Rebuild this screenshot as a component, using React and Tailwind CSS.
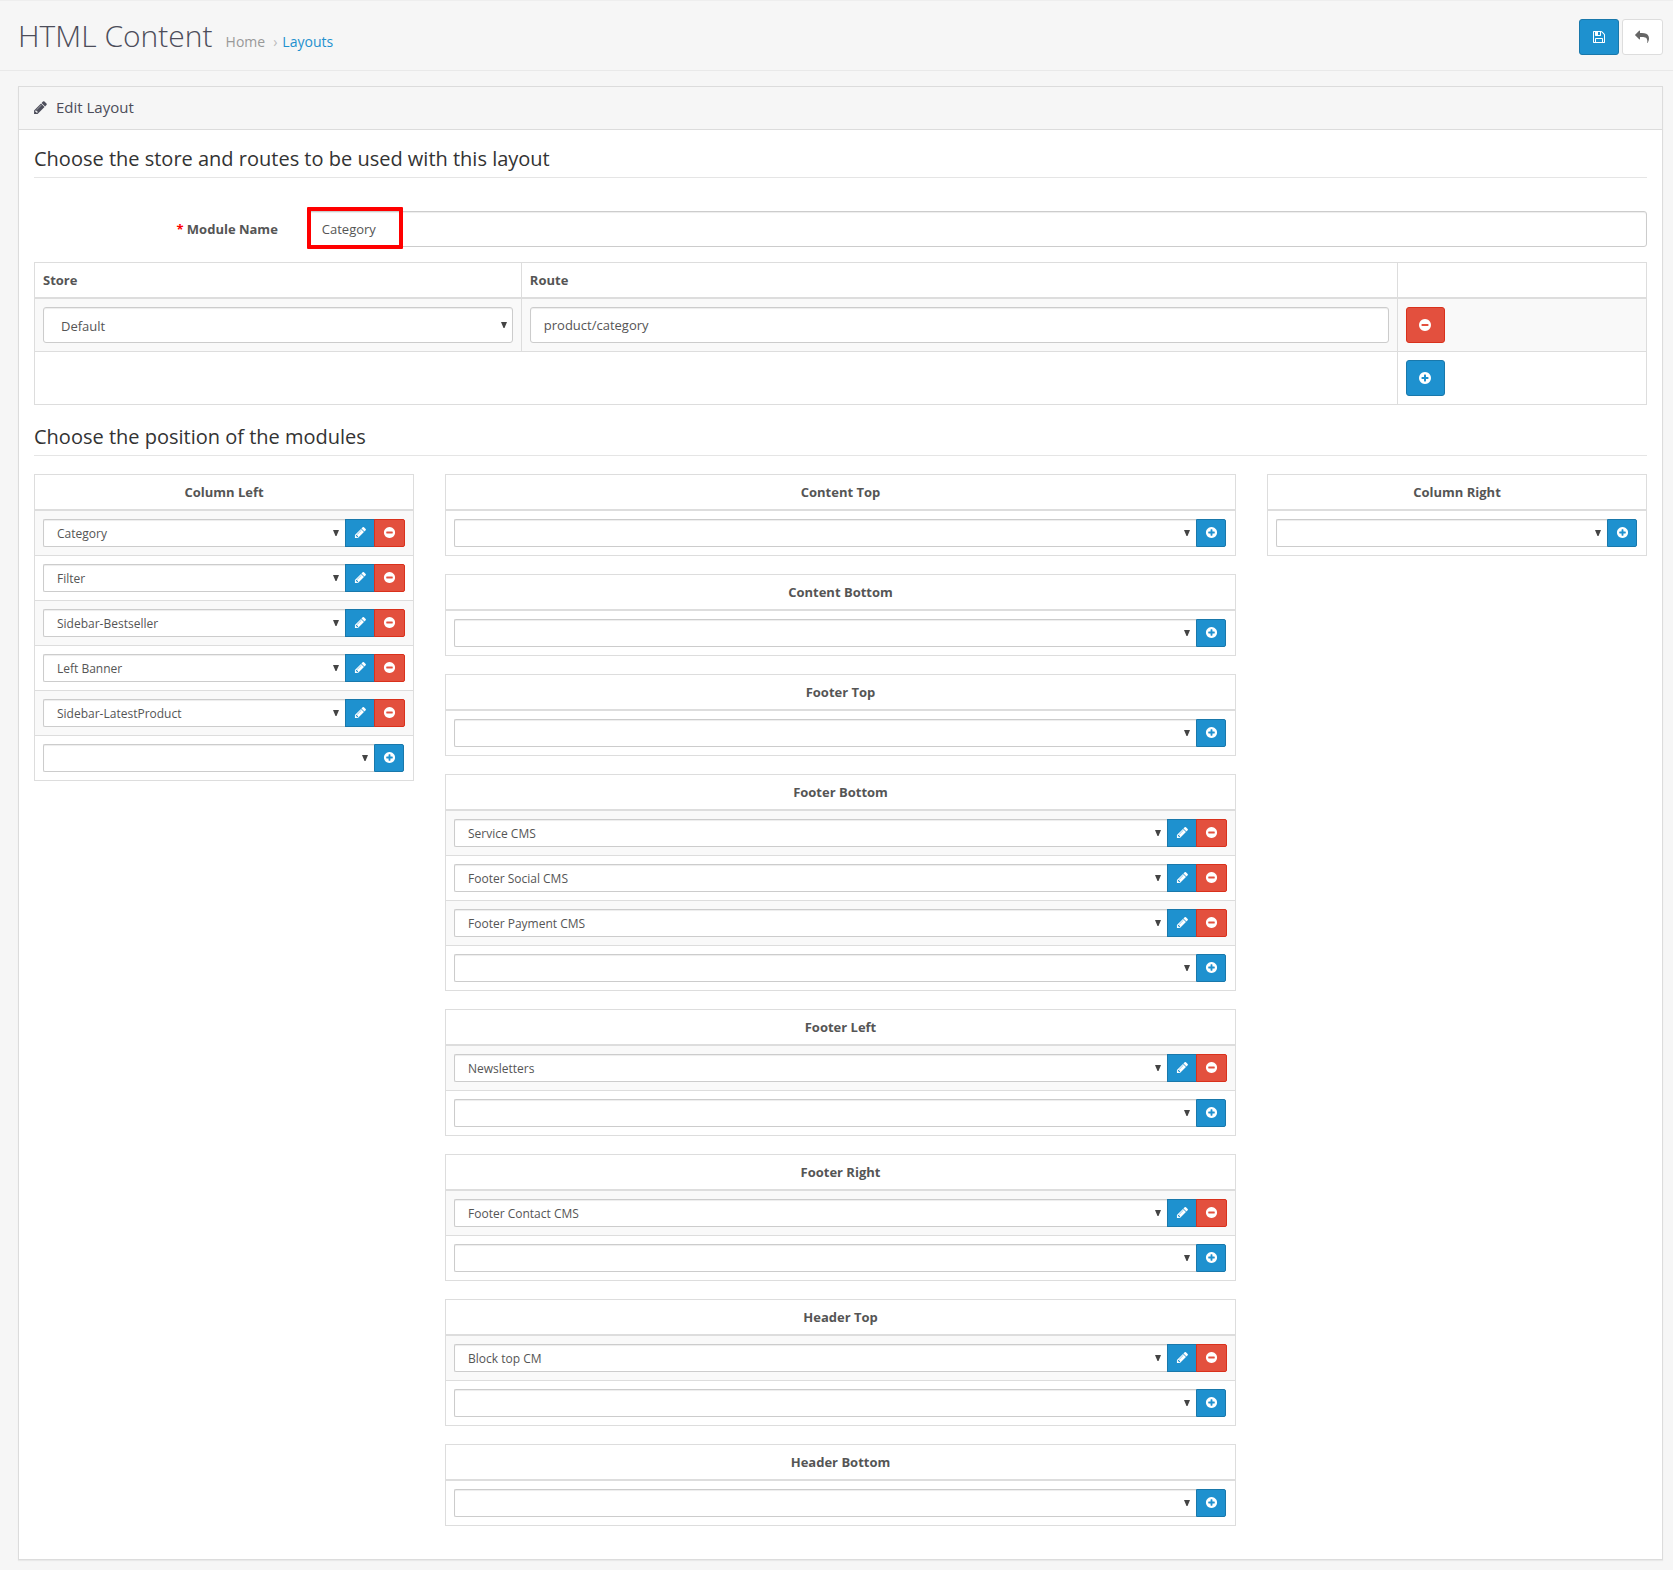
import React from "react";

const CIRCLE =
  "m320-64q0 209-103 385.5t-279.5 279.5-385.5 103-385.5-103-279.5-279.5-103-385.5 103-385.5 279.5-279.5 385.5-103 385.5 103 279.5 279.5 103 385.5z";

const ICONS = {
  pencil:
    "M491 1536l91-91-235-235-91 91v107h128v128h107zm523-928q0-22-22-22-10 0-17 7l-542 542q-7 7-7 17 0 22 22 22 10 0 17-7l542-542q7-7 7-17zm-54-192l416 416-832 832h-416v-416zm683 96q0 53-37 90l-166 166-416-416 166-165q36-38 90-38 53 0 91 38l235 234q37 39 37 91z",
  save: "M512 1536h768v-384h-768v384zm896 0h128v-896q0-14-10-38.5t-20-34.5l-281-281q-10-10-34-20t-39-10v416q0 40-28 68t-68 28h-576q-40 0-68-28t-28-68v-416h-128v1280h128v-416q0-40 28-68t68-28h832q40 0 68 28t28 68v416zm-384-928v-320q0-13-9.5-22.5t-22.5-9.5h-192q-13 0-22.5 9.5t-9.5 22.5v320q0 13 9.5 22.5t22.5 9.5h192q13 0 22.5-9.5t9.5-22.5zm640 32v928q0 40-28 68t-68 28h-1344q-40 0-68-28t-28-68v-1344q0-40 28-68t68-28h928q40 0 88 20t76 48l280 280q28 28 48 76t20 88z",
  reply:
    "M1792 1120q0 166-127 451-3 7-10.5 24t-13.5 30-13 22q-12 17-28 17-15 0-23.5-10t-8.5-25q0-9 2.5-26.5t2.5-23.5q5-68 5-123 0-101-17.5-181t-48.5-138.5-80-101-105.5-69.5-133-42.5-154-21.5-175.5-6h-224v256q0 26-19 45t-45 19-45-19l-512-512q-19-19-19-45t19-45l512-512q19-19 45-19t45 19 19 45v256h224q713 0 875 403 53 134 53 333z",
  minus:
    "M1344 960v-128q0-26-19-45t-45-19h-768q-26 0-45 19t-19 45v128q0 26 19 45t45 19h768q26 0 45-19t19-45z" + CIRCLE,
  plus:
    "M1344 960v-128q0-26-19-45t-45-19h-256v-256q0-26-19-45t-45-19h-128q-26 0-45 19t-19 45v256h-256q-26 0-45 19t-19 45v128q0 26 19 45t45 19h256v256q0 26 19 45t45 19h128q26 0 45-19t19-45v-256h256q26 0 45-19t19-45z" + CIRCLE,
};

function Icon({ name, className = "size-[14px]" }) {
  return (
    <svg viewBox="0 0 1792 1792" fill="currentColor" className={className} aria-hidden="true">
      <path d={ICONS[name]} />
    </svg>
  );
}

const BLUE = "border-[#1978ab] bg-[#1e91cf] text-white";
const RED = "border-[#d9311c] bg-[#e3503e] text-white";
const WHITE = "border-[#dddddd] bg-white text-[#666666]";

function Button({ icon, tone, label, className, iconClass }) {
  return (
    <button
      type="button"
      aria-label={label}
      className={`flex shrink-0 cursor-pointer items-center justify-center border ${tone} ${className}`}
    >
      <Icon name={icon} className={iconClass} />
    </button>
  );
}

const FIELD = "border border-[#cccccc] bg-white text-[#555555] shadow-[inset_0_1px_1px_rgba(0,0,0,0.075)]";

function Select({ label, value, className }) {
  return (
    <div className="relative flex min-w-0 flex-1">
      <select aria-label={label} defaultValue={value} className={`w-full appearance-none ${FIELD} ${className}`}>
        <option value={value}>{value}</option>
      </select>
      <svg
        viewBox="0 0 6 6"
        className="pointer-events-none absolute top-1/2 right-[6px] size-[6px] -translate-y-1/2 fill-[#444444]"
        aria-hidden="true"
      >
        <path d="M0 0h6L3.5 6h-1z" />
      </svg>
    </div>
  );
}

const LINE = "border border-[#dddddd]";
const HEAD = "border border-b-2 border-[#dddddd] p-2 font-bold";

function ModuleTable({ title, modules = [] }) {
  return (
    <table className="mb-[18px] w-full border-collapse">
      <thead>
        <tr>
          <th className={`${HEAD} text-center`}>{title}</th>
        </tr>
      </thead>
      <tbody>
        {modules.map((name) => (
          <tr key={name} className="odd:bg-[#f9f9f9]">
            <td className={`${LINE} p-2`}>
              <div className="flex">
                <Select
                  label={`${title} module`}
                  value={name}
                  className="h-7 rounded-l-[2px] border-r-0 pt-[2px] pl-[13px] text-xs"
                />
                <Button
                  icon="pencil"
                  tone={BLUE}
                  label={`Edit ${name}`}
                  className="h-7 w-[30px] pb-px pl-px"
                  iconClass="size-[13px]"
                />
                <Button
                  icon="minus"
                  tone={RED}
                  label={`Remove ${name}`}
                  className="-ml-px h-7 w-[31px] rounded-r-[2px] pb-px"
                  iconClass="size-[13px]"
                />
              </div>
            </td>
          </tr>
        ))}
        <tr>
          <td className={`${LINE} p-2`}>
            <div className="flex pr-px">
              <Select
                label={`Add ${title} module`}
                value=""
                className="h-7 rounded-l-[2px] border-r-0 pl-[13px] text-xs"
              />
              <Button
                icon="plus"
                tone={BLUE}
                label={`Add module to ${title}`}
                className="h-7 w-[30px] rounded-r-[2px] pb-px pl-px"
                iconClass="size-[13px]"
              />
            </div>
          </td>
        </tr>
      </tbody>
    </table>
  );
}

const CENTER = [
  { title: "Content Top" },
  { title: "Content Bottom" },
  { title: "Footer Top" },
  { title: "Footer Bottom", modules: ["Service CMS", "Footer Social CMS", "Footer Payment CMS"] },
  { title: "Footer Left", modules: ["Newsletters"] },
  { title: "Footer Right", modules: ["Footer Contact CMS"] },
  { title: "Header Top", modules: ["Block top CM"] },
  { title: "Header Bottom" },
];

const LEFT = ["Category", "Filter", "Sidebar-Bestseller", "Left Banner", "Sidebar-LatestProduct"];

function SectionTitle({ children }) {
  return (
    <h2 className="mb-[18px] border-b border-[#e5e5e5] pb-1 text-[20px] leading-7 text-[#333333]">{children}</h2>
  );
}

export default function App() {
  return (
    <div className="min-h-screen border-t border-[#eeeeee] bg-[#f6f6f6] pb-2.5 font-['Open_Sans',sans-serif] text-[13px] leading-[18px] text-[#555555]">
      <header className="flex items-start justify-between border-b border-[#e9e9e9] pt-[18px] pr-2.5 pb-[15px] pl-[18px]">
        <div className="flex items-baseline">
          <h1 className="text-[30px] leading-[33px] font-light text-[#4c4d5a]">HTML Content</h1>
          <nav aria-label="Breadcrumb" className="ml-[13px] flex items-baseline text-sm">
            <a href="#home" className="text-[#999999]">
              Home
            </a>
            <span className="mr-[5px] ml-2 text-[#bbbbbb]">›</span>
            <a href="#layouts" className="text-[#1e91cf]">
              Layouts
            </a>
          </nav>
        </div>
        <div className="flex gap-[3px]">
          <Button icon="save" tone={BLUE} label="Save" className="h-9 w-10 rounded-[3px]" />
          <Button icon="reply" tone={WHITE} label="Back" className="h-9 w-[41px] rounded-[3px] pr-px" />
        </div>
      </header>

      <main className="mt-[15px] mr-2.5 ml-[18px] border border-[#dcdcdc] bg-white shadow-[0_1px_1px_rgba(0,0,0,0.05)]">
        <div className="flex items-center border-b border-[#dcdcdc] bg-[#f6f6f6] px-[14px] pt-[11px] pb-[13px] text-[#4c4d5a]">
          <Icon name="pencil" className="mr-2 size-[15px]" />
          <h3 className="text-[15px] leading-[18px]">Edit Layout</h3>
        </div>

        <div className="p-[15px]">
          <SectionTitle>Choose the store and routes to be used with this layout</SectionTitle>

          <div className="grid grid-cols-6 items-center gap-x-[30px] py-[15px]">
            <label htmlFor="module-name" className="text-right font-bold">
              <span className="text-[#ff0000]">*</span> Module Name
            </label>
            <div className="relative col-span-5">
              <input
                id="module-name"
                type="text"
                defaultValue="Category"
                className={`h-9 w-full rounded-[3px] px-[13px] ${FIELD}`}
              />
              <div className="pointer-events-none absolute -top-1 -left-px h-[42px] w-24 rounded-[1px] border-4 border-[#ff0000]" />
            </div>
          </div>

          <table className="mb-[18px] w-full table-fixed border-collapse">
            <colgroup>
              <col className="w-[30.2%]" />
              <col />
              <col className="w-[15.45%]" />
            </colgroup>
            <thead>
              <tr>
                <th className={`${HEAD} text-left`}>Store</th>
                <th className={`${HEAD} text-left`}>Route</th>
                <th className={HEAD} aria-label="Action" />
              </tr>
            </thead>
            <tbody>
              <tr className="bg-[#f9f9f9]">
                <td className={`${LINE} p-2`}>
                  <div className="flex">
                    <Select label="Store" value="Default" className="h-9 rounded-[3px] pt-[2px] pl-[17px]" />
                  </div>
                </td>
                <td className={`${LINE} p-2`}>
                  <input
                    type="text"
                    aria-label="Route"
                    defaultValue="product/category"
                    className={`block h-9 w-full rounded-[3px] px-[13px] ${FIELD}`}
                  />
                </td>
                <td className={`${LINE} p-2`}>
                  <Button icon="minus" tone={RED} label="Remove route" className="h-9 w-[39px] rounded-[3px]" />
                </td>
              </tr>
              <tr>
                <td className={`${LINE} p-2`} colSpan={2} />
                <td className={`${LINE} p-2`}>
                  <Button icon="plus" tone={BLUE} label="Add route" className="h-9 w-[39px] rounded-[3px]" />
                </td>
              </tr>
            </tbody>
          </table>

          <SectionTitle>Choose the position of the modules</SectionTitle>

          <div className="grid grid-cols-4 items-start gap-x-[31px]">
            <ModuleTable title="Column Left" modules={LEFT} />
            <div className="col-span-2">
              {CENTER.map((section) => (
                <ModuleTable key={section.title} {...section} />
              ))}
            </div>
            <ModuleTable title="Column Right" />
          </div>
        </div>
      </main>
    </div>
  );
}
